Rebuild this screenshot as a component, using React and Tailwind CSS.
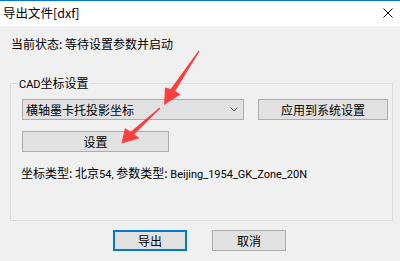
import React from "react";

const font = { fontFamily: '"Noto Sans CJK SC", "Microsoft YaHei", sans-serif' };

function L({ children }) {
  return (
    <span className="text-[11px]" style={{ fontFamily: 'Roboto, "Noto Sans CJK SC", sans-serif' }}>
      {children}
    </span>
  );
}

export default function App() {
  return (
    <div
      className="relative w-[400px] h-[261px] bg-[#f0f0f0] text-[12px] leading-[16px] text-black overflow-hidden"
      style={font}
    >
      {/* title bar */}
      <div className="h-[26px] bg-white border-t border-[#0078d7] flex items-center justify-between pl-[3px] pr-[7px]">
        <span className="text-[12.5px] leading-[16px] -mt-[1px]">导出文件[dxf]</span>
        <svg width="10" height="10" viewBox="0 0 10 10" className="-mt-[2px]">
          <path d="M0.5 0.5 L9.5 9.5 M9.5 0.5 L0.5 9.5" stroke="#000" strokeWidth="1" fill="none" />
        </svg>
      </div>

      <div className="pl-[10px] pr-[7px]">
        <div className="mt-[10px] pl-[1px]">当前状态: 等待设置参数并启动</div>

        {/* group box */}
        <div className="relative mt-[31px] h-[138px] border border-[#dcdcdc] pt-[15px] pl-[11px]">
          <span className="absolute left-[7px] -top-[9px] bg-[#f0f0f0] px-[1px]">
            <L>CAD</L>坐标设置
          </span>
          <div className="flex gap-[14px]">
            <div className="w-[222px] h-[21px] bg-[#e1e1e1] border border-[#adadad] flex items-center justify-between pl-[3px] pr-[5px]">
              <span>横轴墨卡托投影坐标</span>
              <svg width="8" height="5" viewBox="0 0 8 5">
                <path d="M0.5 0.5 L4 4 L7.5 0.5" stroke="#555" strokeWidth="1" fill="none" />
              </svg>
            </div>
            <div className="w-[130px] h-[21px] bg-[#e1e1e1] border border-[#adadad] flex items-center justify-center">
              应用到系统设置
            </div>
          </div>
          <div className="mt-[11px] w-[147px] h-[21px] bg-[#e1e1e1] border border-[#adadad] flex items-center justify-center">
            设置
          </div>
          <div className="mt-[13px] -ml-[1px]">
            坐标类型: 北京<L>54,</L> 参数类型: <L>Beijing_1954_GK_Zone_20N</L>
          </div>
        </div>

        {/* footer */}
        <div className="mt-[9px] flex gap-[25px] pl-[103px]">
          <div className="w-[74px] h-[21px] bg-[#e1e1e1] border-2 border-[#0078d7] flex items-center justify-center">
            导出
          </div>
          <div className="w-[74px] h-[21px] bg-[#e1e1e1] border border-[#adadad] flex items-center justify-center">
            取消
          </div>
        </div>
      </div>

      {/* annotation arrows */}
      <svg className="absolute left-0 top-0 pointer-events-none" width="400" height="261" viewBox="0 0 400 261">
        <polygon
          points="198.6,50.6 170.7,89.1 165,87.5 164,105 180.5,94.5 175.3,90.9 199.4,51.4"
          fill="#fa3f3f"
        />
        <polygon
          points="159.6,107.5 130.7,131.8 125,128 121.5,143.5 139.5,138.2 134.3,134.2 160.4,108.5"
          fill="#fa3f3f"
        />
      </svg>
    </div>
  );
}
